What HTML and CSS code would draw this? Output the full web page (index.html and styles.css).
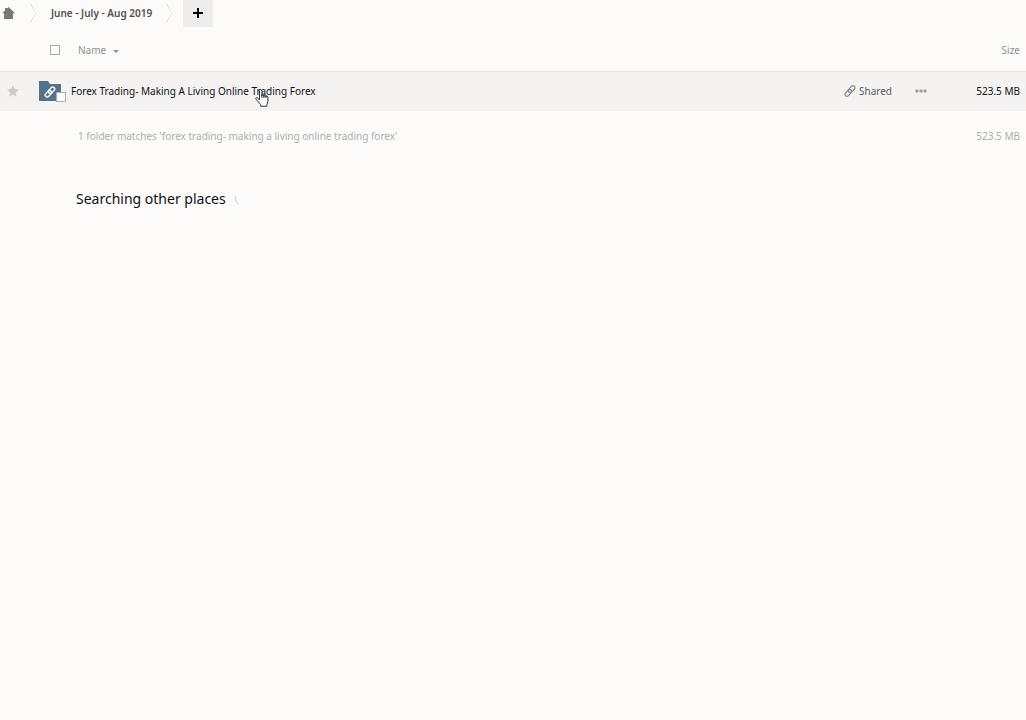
FILE: index.html
```html
<!DOCTYPE html>
<html lang="en">
<head>
  <meta charset="UTF-8" />
  <meta name="viewport" content="width=device-width, initial-scale=1.0"/>
  <title>June - July - Aug 2019 | Files</title>
  <link rel="stylesheet" href="styles.css">
</head>
<body>

  <nav class="breadcrumb">
    <a class="home" href="#" aria-label="Home">
      <svg width="13" height="12" viewBox="0 0 13 12"><path d="M6.5 0 13 6.3h-2V12H2V6.3H0L3 3.4V1h2v.5z"/></svg>
    </a>
    <svg class="divider" width="8" height="20" viewBox="0 0 8 20"><path d="M1 0l6 10-6 10"/></svg>
    <a class="crumb" href="#">June - July - Aug 2019</a>
    <svg class="divider" width="8" height="20" viewBox="0 0 8 20"><path d="M1 0l6 10-6 10"/></svg>
    <button class="add" aria-label="New">
      <svg width="10" height="10" viewBox="0 0 10 10"><path d="M5 0v10M0 5h10"/></svg>
    </button>
  </nav>

  <table class="files">
    <colgroup>
      <col class="col-star">
      <col class="col-icon">
      <col>
      <col class="col-shared">
      <col class="col-more">
      <col class="col-size">
    </colgroup>
    <thead>
      <tr>
        <th></th>
        <th class="check"><input type="checkbox" aria-label="Select all"></th>
        <th class="indent">Name <span class="caret"></span></th>
        <th></th>
        <th></th>
        <th class="size">Size</th>
      </tr>
    </thead>
    <tbody>
      <tr>
        <td>
          <button class="star" aria-label="Favorite">
            <svg width="12" height="12" viewBox="0 0 12 12"><path d="M6 0l1.7 4.1 4.3.4-3.3 2.9 1 4.4L6 9.5l-3.7 2.3 1-4.4L0 4.5l4.3-.4z"/></svg>
          </button>
        </td>
        <td>
          <div class="folder">
            <svg width="22" height="20" viewBox="0 0 22 20">
              <path class="folder-shape" d="M0 0h9l2 3h11v17H0z"/>
              <g class="folder-link" transform="translate(11 11) rotate(-48)">
                <rect x="-6" y="-2" width="7.4" height="4" rx="2"/>
                <rect x="-1.4" y="-2" width="7.400" height="4" rx="2"/>
              </g>
            </svg>
            <input type="checkbox" aria-label="Select folder">
          </div>
        </td>
        <td class="name">
          <a href="#">Forex Trading- Making A Living Online Trading Forex</a>
          <svg class="cursor" width="14" height="18" viewBox="0 0 14 18"><path d="M4.500 11V2c0-2 2.400-2 2.400 0v5-1.200c0-1.400 2-1.400 2 0V7.500v-1c0-1.300 2-1.300 2 0V8c0-1.400 2-1.400 2 0v4.200c0 1.500-1 2.300-1 3.400v1.600H5.600v-1.600C4.500 14 2.500 12 1 10.200c-.8-1.200.6-2.200 1.700-1.200z"/><path d="M6.900 6v3M8.900 6v3M10.900 7v2"/></svg>
        </td>
        <td>
          <a class="shared" href="#">
            <svg width="12" height="12" viewBox="0 0 12 12"><g transform="translate(6 6) rotate(-48)"><rect x="-6.500" y="-2" width="8" height="4" rx="2"/><rect x="-1.500" y="-2" width="8" height="4" rx="2"/></g></svg>
            Shared
          </a>
        </td>
        <td>
          <button class="more" aria-label="More">
            <svg width="12" height="4" viewBox="0 0 12 4"><circle cx="2" cy="2" r="1.700"/><circle cx="6" cy="2" r="1.700"/><circle cx="10" cy="2" r="1.700"/></svg>
          </button>
        </td>
        <td class="size">523.5 MB</td>
      </tr>
    </tbody>
    <tfoot>
      <tr>
        <td></td>
        <td></td>
        <td class="indent" colspan="3">1 folder matches 'forex trading- making a living online trading forex'</td>
        <td class="size">523.5 MB</td>
      </tr>
    </tfoot>
  </table>

  <h2 class="searching">
    Searching other places
    <svg class="spinner" width="12" height="12" viewBox="0 0 12 12"><path d="M2 3C1 7 2 10 5 11"/></svg>
  </h2>

</body>
</html>
```
FILE: styles.css
```css
:root {
  --bg: #fcfbfa;
  --row: #f4f3f2;
  --line: #e6e5e4;
  --text: #101014;
  --muted: #909090;
  --faint: #adadad;
  --folder: #56718a;
}

* { box-sizing: border-box; }

body {
  margin: 0;
  font-family: "Noto Sans", "Open Sans", sans-serif;
  font-size: 10px;
  line-height: 16px;
  background: var(--bg);
  color: var(--text);
}

a {
  color: inherit;
  text-decoration: none;
}

button {
  padding: 0;
  border: none;
  background: none;
  cursor: pointer;
}

svg { display: block; }

input[type="checkbox"] {
  appearance: none;
  display: block;
  width: 10px;
  height: 10px;
  margin: 0;
  border: 1px solid #aaa;
  background: #fff;
}

.breadcrumb {
  display: flex;
  align-items: center;
  height: 30px;
  padding-left: 2px;
  padding-bottom: 4px;
}

.home {
  margin-right: 14px;
  fill: #777;
}

.divider {
  fill: none;
  stroke: #e3e2e2;
}

.crumb {
  margin: 0 13px 0 14px;
  color: #505050;
  font-weight: 600;
}

.add {
  display: flex;
  align-items: center;
  justify-content: center;
  width: 30px;
  height: 28px;
  margin-left: 10px;
  background: #eeedec;
}

.add svg {
  stroke: #000;
  stroke-width: 2;
}

.files {
  width: 100%;
  table-layout: fixed;
  border-collapse: collapse;
}

.col-star { width: 39px; }
.col-icon { width: 32px; }
.col-shared { width: 64px; }
.col-more { width: 52px; }
.col-size { width: 66px; }

th,
td {
  height: 41px;
  padding: 0;
  text-align: left;
  font-weight: 400;
}

th { color: var(--muted); }

.check { padding-left: 11px; }

.indent { padding-left: 7px; }

.size {
  padding-right: 6px;
  text-align: right;
}

.caret {
  display: inline-block;
  margin-left: 4px;
  border: 3px solid transparent;
  border-top-color: var(--muted);
  border-bottom: none;
  vertical-align: middle;
}

tbody tr {
  background: var(--row);
  border-top: 1px solid var(--line);
}

tbody td { height: 40px; }

tfoot td {
  height: 50px;
  color: var(--faint);
}

.star {
  display: block;
  margin-left: 7px;
  fill: #ccc;
}

.folder {
  position: relative;
  width: 27px;
}

.folder-shape { fill: var(--folder); }

.folder-link {
  fill: none;
  stroke: #fff;
  stroke-width: 1.4;
}

.folder input {
  position: absolute;
  right: 0;
  bottom: -1px;
}

.name { position: relative; }

.cursor {
  position: absolute;
  top: 17px;
  left: 184px;
  fill: #fff;
  stroke: #333;
  pointer-events: none;
}

.shared {
  display: flex;
  align-items: center;
  gap: 3px;
  color: #5c5c5c;
}

.shared svg {
  fill: none;
  stroke: #888;
  stroke-width: 1.2;
}

.more {
  display: block;
  margin-left: 7px;
  fill: #a0a0a0;
}

.searching {
  display: flex;
  align-items: center;
  gap: 8px;
  margin: 26px 0 0 76px;
  font-size: 14px;
  font-weight: 400;
  line-height: 24px;
}

.spinner {
  fill: none;
  stroke: #ccc;
}
```
